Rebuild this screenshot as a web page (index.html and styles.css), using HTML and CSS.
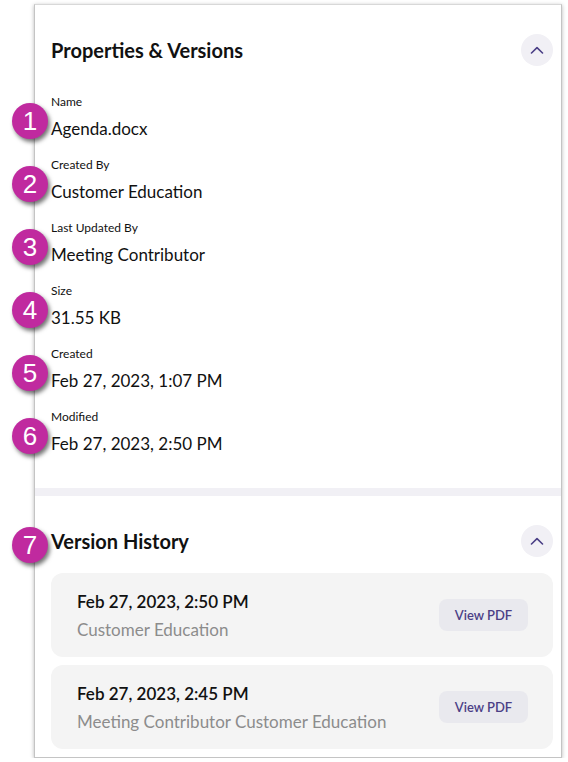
FILE: index.html
```html
<!DOCTYPE html>
<html lang="en">
<head>
<meta charset="utf-8">
<title>Properties &amp; Versions</title>
<link rel="stylesheet" href="styles.css">
</head>
<body>
<div class="page">
  <div class="panel">
    <section class="props">
      <div class="header">
        <h2 class="title">Properties &amp; Versions</h2>
        <button class="toggle" aria-label="Collapse">
          <svg width="14" height="8" viewBox="0 0 14 8"><path d="M1.5 7 L7 1.6 L12.5 7" fill="none" stroke="#4b3f86" stroke-width="1.6" stroke-linecap="round" stroke-linejoin="round"/></svg>
        </button>
      </div>
      <div class="list">
        <div class="prop"><span class="badge">1</span><div class="label">Name</div><div class="value">Agenda.docx</div></div>
        <div class="prop"><span class="badge">2</span><div class="label">Created By</div><div class="value">Customer Education</div></div>
        <div class="prop"><span class="badge">3</span><div class="label">Last Updated By</div><div class="value">Meeting Contributor</div></div>
        <div class="prop"><span class="badge">4</span><div class="label">Size</div><div class="value">31.55 KB</div></div>
        <div class="prop"><span class="badge">5</span><div class="label">Created</div><div class="value">Feb 27, 2023, 1:07 PM</div></div>
        <div class="prop"><span class="badge">6</span><div class="label">Modified</div><div class="value">Feb 27, 2023, 2:50 PM</div></div>
      </div>
    </section>
    <div class="band"></div>
    <section class="versions">
      <div class="header vh">
        <span class="badge badge-h">7</span>
        <h2 class="title">Version History</h2>
        <button class="toggle" aria-label="Collapse">
          <svg width="14" height="8" viewBox="0 0 14 8"><path d="M1.5 7 L7 1.6 L12.5 7" fill="none" stroke="#4b3f86" stroke-width="1.6" stroke-linecap="round" stroke-linejoin="round"/></svg>
        </button>
      </div>
      <div class="cards">
        <div class="card">
          <div class="info">
            <div class="date">Feb 27, 2023, 2:50 PM</div>
            <div class="author">Customer Education</div>
          </div>
          <button class="pdf">View PDF</button>
        </div>
        <div class="card">
          <div class="info">
            <div class="date">Feb 27, 2023, 2:45 PM</div>
            <div class="author">Meeting Contributor Customer Education</div>
          </div>
          <button class="pdf">View PDF</button>
        </div>
      </div>
    </section>
  </div>
</div>
</body>
</html>
```
FILE: styles.css
```css
* { box-sizing: border-box; }
html, body { margin: 0; padding: 0; background: #fff; }
body { font-family: Lato, "Noto Sans", sans-serif; color: #111; }

.page { padding: 4px 6px 0 34px; }

.panel {
  width: 528px;
  background: #fff;
  border: 1px solid #c4c4c4;
  border-top-color: #d8d8d8;
  box-shadow: 0 1px 4px rgba(0,0,0,0.28);
}

.props { padding: 29px 8px 32px 16px; }

.header {
  display: flex;
  align-items: center;
  justify-content: space-between;
  height: 32px;
  position: relative;
}
.title {
  margin: 0;
  font-size: 20px;
  font-weight: 700;
  line-height: 24px;
  color: #111;
}
.toggle {
  width: 32px;
  height: 32px;
  border-radius: 50%;
  border: 0;
  padding: 0;
  background: #f1f0f5;
  display: flex;
  align-items: center;
  justify-content: center;
}

.list {
  margin-top: 28px;
  display: flex;
  flex-direction: column;
  gap: 16px;
}
.prop { position: relative; }
.label {
  font-size: 12px;
  line-height: 16px;
  color: #111;
  margin-bottom: 7px;
}
.value {
  font-size: 17px;
  line-height: 24px;
  color: #111;
}

.badge {
  position: absolute;
  left: -39px;
  top: 9px;
  width: 36px;
  height: 36px;
  border-radius: 50%;
  background: #c02a9f;
  color: #fff;
  font-family: "Liberation Sans", Arial, sans-serif;
  font-size: 26px;
  line-height: 36px;
  text-align: center;
  box-shadow: 2px 3px 4px rgba(0,0,0,0.55);
}
.badge-h { top: 2px; }

.band { height: 8px; background: #f1f0f5; }

.versions { padding: 29px 8px 8px 16px; }
.cards {
  margin-top: 16px;
  display: flex;
  flex-direction: column;
  gap: 8px;
}
.card {
  height: 84px;
  background: #f4f4f4;
  border-radius: 12px;
  padding: 0 25px 0 26px;
  display: flex;
  align-items: center;
  justify-content: space-between;
}
.info { display: flex; flex-direction: column; gap: 6px; padding-top: 1px; }
.date {
  font-size: 17px;
  font-weight: 600;
  line-height: 22px;
  color: #111;
}
.author {
  font-size: 17px;
  line-height: 22px;
  color: #8c8c8c;
}
.pdf {
  width: 89px;
  height: 32px;
  border: 0;
  border-radius: 8px;
  background: #e9e9ee;
  color: #4b3f86;
  font-family: Lato, sans-serif;
  font-size: 13px;
  font-weight: 600;
  padding: 0;
}
```
